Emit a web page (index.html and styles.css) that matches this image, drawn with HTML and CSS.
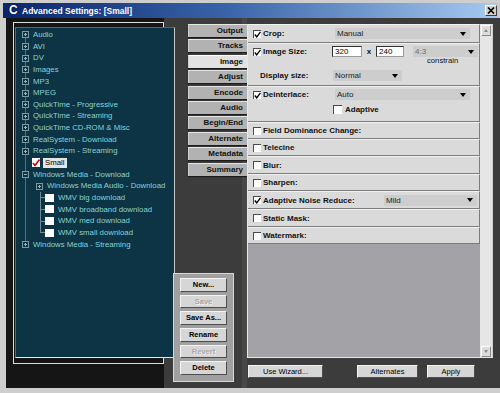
FILE: index.html
```html
<!DOCTYPE html>
<html lang="en">
<head>
    <meta charset="UTF-8">
    <title>Advanced Settings</title>
    <link rel="stylesheet" href="styles.css">
</head>
<body>

<div class="window">
    <div class="titlebar">
        <span class="app-icon">C</span>
        <span class="title">Advanced Settings: [Small]</span>
        <span class="close">
            <svg width="8" height="7" viewBox="0 0 8 7"><path d="M1 0.5 L7 6.5 M7 0.5 L1 6.5" stroke="#000" stroke-width="1.6"/></svg>
        </span>
    </div>

    <div class="main">
        <div class="side">
            <div class="frame">
                <div class="outline">
                    <div class="tree">
                        <ul class="tree-list">
                            <li><i class="exp"></i>Audio</li>
                            <li><i class="exp"></i>AVI</li>
                            <li><i class="exp"></i>DV</li>
                            <li><i class="exp"></i>Images</li>
                            <li><i class="exp"></i>MP3</li>
                            <li><i class="exp"></i>MPEG</li>
                            <li><i class="exp"></i>QuickTime - Progressive</li>
                            <li><i class="exp"></i>QuickTime - Streaming</li>
                            <li><i class="exp"></i>QuickTime CD-ROM &amp; Misc</li>
                            <li><i class="exp"></i>RealSystem - Download</li>
                            <li><i class="exp"></i>RealSystem - Streaming</li>
                            <li class="small-item">
                                <i class="tcb">
                                    <svg width="8" height="8" viewBox="0 0 8 8"><polyline points="1,4 3,6.5 7.5,0.5" fill="none" stroke="#c4001c" stroke-width="1.6"/></svg>
                                </i><span class="selected">Small</span>
                            </li>
                            <li><i class="exp minus"></i>Windows Media - Download</li>
                            <li class="sub"><i class="exp"></i>Windows Media Audio - Download</li>
                            <li class="leaf"><i class="tcb"></i>WMV big download</li>
                            <li class="leaf"><i class="tcb"></i>WMV broadband download</li>
                            <li class="leaf"><i class="tcb"></i>WMV med download</li>
                            <li class="leaf last"><i class="tcb"></i>WMV small download</li>
                            <li><i class="exp"></i>Windows Media - Streaming</li>
                        </ul>
                    </div>
                </div>
            </div>
        </div>

        <div class="mid">
            <div class="tabs">
                <div class="tab">Output</div>
                <div class="tab">Tracks</div>
                <div class="tab active">Image</div>
                <div class="tab">Adjust</div>
                <div class="tab">Encode</div>
                <div class="tab">Audio</div>
                <div class="tab">Begin/End</div>
                <div class="tab">Alternate</div>
                <div class="tab">Metadata</div>
                <div class="tab">Summary</div>
            </div>
            <div class="file-buttons">
                <div class="btn">New...</div>
                <div class="btn disabled">Save</div>
                <div class="btn">Save As...</div>
                <div class="btn">Rename</div>
                <div class="btn disabled">Revert</div>
                <div class="btn">Delete</div>
            </div>
        </div>

        <div class="content">
            <div class="panel">
                <div class="rows">
                    <div class="row h19">
                        <span class="chk"><i class="cb on"><svg width="7" height="7" viewBox="0 0 7 7"><polyline points="0.8,3.5 2.7,5.8 6.5,0.8" fill="none" stroke="#000" stroke-width="1.4"/></svg></i>Crop:</span>
                        <span class="dd w135">Manual<b class="arrow"></b></span>
                    </div>
                    <div class="row stack h43">
                        <div class="line">
                            <span class="chk narrow"><i class="cb on"><svg width="7" height="7" viewBox="0 0 7 7"><polyline points="0.8,3.5 2.7,5.8 6.5,0.8" fill="none" stroke="#000" stroke-width="1.4"/></svg></i>Image Size:</span>
                            <span class="field w30">320</span>
                            <span class="times">x</span>
                            <span class="field w28">240</span>
                            <span class="ratio">
                                <span class="dd w65 dim">4:3<b class="arrow"></b></span>
                                <span class="hint">constrain</span>
                            </span>
                        </div>
                        <div class="line gap5">
                            <span class="plain">Display size:</span>
                            <span class="dd w69">Normal<b class="arrow"></b></span>
                        </div>
                    </div>
                    <div class="row stack h36">
                        <div class="line">
                            <span class="chk"><i class="cb on"><svg width="7" height="7" viewBox="0 0 7 7"><polyline points="0.8,3.5 2.7,5.8 6.5,0.8" fill="none" stroke="#000" stroke-width="1.4"/></svg></i>Deinterlace:</span>
                            <span class="dd w135">Auto<b class="arrow"></b></span>
                        </div>
                        <div class="line gap5 sub-opt">
                            <i class="cb"></i><span class="opt">Adaptive</span>
                        </div>
                    </div>
                    <div class="row h17"><span class="chk"><i class="cb"></i>Field Dominance Change:</span></div>
                    <div class="row h17"><span class="chk"><i class="cb"></i>Telecine</span></div>
                    <div class="row h18"><span class="chk"><i class="cb"></i>Blur:</span></div>
                    <div class="row h17"><span class="chk"><i class="cb"></i>Sharpen:</span></div>
                    <div class="row h18">
                        <span class="chk wide"><i class="cb on"><svg width="7" height="7" viewBox="0 0 7 7"><polyline points="0.8,3.5 2.7,5.8 6.5,0.8" fill="none" stroke="#000" stroke-width="1.4"/></svg></i>Adaptive Noise Reduce:</span>
                        <span class="dd w93">Mild<b class="arrow"></b></span>
                    </div>
                    <div class="row h18"><span class="chk"><i class="cb"></i>Static Mask:</span></div>
                    <div class="row h17"><span class="chk"><i class="cb"></i>Watermark:</span></div>
                    <div class="empty"></div>
                </div>
                <div class="scrollbar">
                    <span class="sb-btn"><b class="up"></b></span>
                    <span class="sb-btn"><b class="down"></b></span>
                </div>
            </div>
            <div class="actions">
                <div class="btn wizard">Use Wizard...</div>
                <div class="btn alternates">Alternates</div>
                <div class="btn apply">Apply</div>
            </div>
        </div>
    </div>
</div>

</body>
</html>
```

FILE: styles.css
```css
html, body {
    margin: 0;
    padding: 0;
}
body {
    width: 500px;
    height: 393px;
    overflow: hidden;
    background: #cfcece;
    font-family: "Liberation Sans", Arial, sans-serif;
}
.window {
    height: 393px;
    padding-top: 3px;
    box-sizing: border-box;
    background: #cfcece;
}

/* title bar */
.titlebar {
    display: flex;
    align-items: center;
    height: 15px;
    margin: 0 2px 0 3px;
    background: linear-gradient(to right, #0a246a 0%, #3a64a8 45%, #a6caf0 100%);
}
.app-icon {
    width: 10px;
    margin-left: 6px;
    font-size: 12px;
    font-weight: bold;
    line-height: 13px;
    color: #fff;
    text-shadow: 1px 0 0 #001040, -1px 0 0 #001040;
}
.title {
    margin-left: 3px;
    font-size: 8.5px;
    font-weight: bold;
    color: #fff;
}
.close {
    display: flex;
    align-items: center;
    justify-content: center;
    width: 12px;
    height: 11px;
    margin-left: auto;
    margin-right: 1px;
    box-sizing: border-box;
    background: #d4d0c8;
    border: 1px solid;
    border-color: #fff #404040 #404040 #fff;
}

.main {
    display: flex;
    height: 370px;
    margin-left: 6px;
    background: #3c3c3c;
}

/* preset tree */
.side {
    width: 167px;
    flex: none;
}
.frame {
    width: 158px;
    height: 100%;
    padding: 4px 0 24px 7px;
    box-sizing: border-box;
    background: #151515;
}
.outline {
    height: 100%;
    padding: 4px 0 5px 1px;
    box-sizing: border-box;
    border: 1px solid #dcdcdc;
}
.tree {
    width: 160px;
    height: 100%;
    box-sizing: border-box;
    padding: 1px 0 0 6px;
    background: #0c3444;
    border: 1px solid;
    border-color: #5e6468 #c8c8c8 #e6e6e6 #5e6468;
}
.tree-list {
    list-style: none;
    margin: 0;
    padding: 0;
    font-size: 7.8px;
    line-height: 11.65px;
    color: #8ad2d4;
    white-space: nowrap;
    background: linear-gradient(#50707a, #50707a) no-repeat 3px 6px / 1px 210px;
}
.tree-list li {
    display: flex;
    align-items: center;
    height: 11.65px;
}
.exp {
    width: 7px;
    height: 7px;
    margin-right: 4px;
    box-sizing: border-box;
    border: 1px solid #7d9aa2;
    background:
        linear-gradient(#9db4b8, #9db4b8) center / 3px 1px no-repeat,
        linear-gradient(#9db4b8, #9db4b8) center / 1px 3px no-repeat,
        #0c3444;
}
.exp.minus {
    background:
        linear-gradient(#9db4b8, #9db4b8) center / 3px 1px no-repeat,
        #0c3444;
}
.tree-list .sub {
    padding-left: 14px;
}
.tree-list .leaf {
    padding-left: 23px;
    background:
        linear-gradient(#6f8a90, #6f8a90) 18px 0 / 1px 100% no-repeat,
        linear-gradient(#6f8a90, #6f8a90) 18px 50% / 5px 1px no-repeat;
}
.tree-list .leaf.last {
    background:
        linear-gradient(#6f8a90, #6f8a90) 18px 0 / 1px 50% no-repeat,
        linear-gradient(#6f8a90, #6f8a90) 18px 50% / 5px 1px no-repeat;
}
.tcb {
    display: flex;
    align-items: center;
    justify-content: center;
    width: 9px;
    height: 8px;
    margin-right: 4px;
    background: #fff;
}
.small-item {
    padding-left: 10px;
}
.small-item .tcb {
    width: 8px;
    height: 9px;
    margin-right: 3px;
}
.selected {
    padding: 0 2px;
    line-height: 10px;
    background: #e4e4e4;
    color: #000;
}

/* tabs and preset buttons */
.mid {
    width: 74px;
    flex: none;
    display: flex;
    flex-direction: column;
    background: linear-gradient(#484848, #484848) no-repeat right 0 top 0 / 5px 100%;
}
.tabs {
    margin: 6px 0 0 15px;
}
.tab {
    height: 13px;
    margin-bottom: 2.4px;
    padding-right: 4px;
    box-sizing: border-box;
    text-align: right;
    font-size: 8px;
    font-weight: bold;
    line-height: 12px;
    color: #111;
    background: #b2b2b2;
    border-top: 1px solid #e6e6e6;
    border-left: 1px solid #d2d2d2;
    box-shadow: 0 1px 1px #1c1c1c;
}
.tab.active {
    background: #e2e2e2;
    border-top-color: #fff;
}
.file-buttons {
    width: 61px;
    height: 109px;
    margin-top: auto;
    margin-bottom: 6px;
    padding: 4px 0 0 6px;
    box-sizing: border-box;
    background-color: #a0a0a0;
    border: 1px solid #d8d8d8;
}
.btn {
    height: 13.5px;
    box-sizing: border-box;
    text-align: center;
    font-size: 7.5px;
    line-height: 12px;
    color: #000;
    background: #d6d6d6;
    border: 1px solid;
    border-color: #f4f4f4 #4c4c4c #4c4c4c #f4f4f4;
}
.file-buttons .btn {
    width: 47px;
    margin-bottom: 3.2px;
    font-weight: bold;
}
.btn.disabled {
    color: #a9a9a9;
    text-shadow: 1px 1px 0 #f0f0f0;
}

/* settings panel */
.content {
    width: 246px;
    flex: none;
    display: flex;
    flex-direction: column;
}
.panel {
    display: flex;
    height: 334px;
    margin-top: 6px;
    box-sizing: border-box;
    border-left: 1px solid #e8e8e8;
    border-bottom: 1px solid #e8e8e8;
}
.rows {
    width: 232px;
    display: flex;
    flex-direction: column;
}
.empty {
    flex: 1;
    background-color: #a3a2a7;
}
.row {
    display: flex;
    align-items: center;
    flex: none;
    padding-left: 5px;
    box-sizing: border-box;
    background: #dadada;
    border-top: 1px solid #f2f2f2;
    border-bottom: 1px solid #7c7c7c;
    border-right: 1px solid #7c7c7c;
    font-size: 8px;
    color: #111;
}
.row.stack {
    flex-direction: column;
    align-items: stretch;
    padding-top: 2px;
}
.h17 { height: 17px; }
.h18 { height: 18px; }
.h19 { height: 19px; }
.h36 { height: 36px; }
.h43 { height: 43px; padding-top: 3px; }
.line {
    display: flex;
    align-items: flex-start;
}
.line .chk {
    height: 11px;
}
.gap5 {
    margin-top: 5px;
    align-items: center;
}
.chk {
    display: flex;
    align-items: center;
    width: 82px;
    flex: none;
    font-weight: bold;
    white-space: nowrap;
}
.chk.narrow { width: 79px; }
.chk.wide { width: 131px; }
.cb {
    display: flex;
    align-items: center;
    justify-content: center;
    width: 8px;
    height: 8px;
    margin-right: 2px;
    box-sizing: border-box;
    background: #fff;
    border-top: 1px solid #4a4a4a;
    border-left: 1px solid #4a4a4a;
    flex: none;
}
.dd {
    display: flex;
    align-items: center;
    justify-content: space-between;
    height: 11px;
    padding: 0 4px 0 2px;
    box-sizing: border-box;
    background: #cdcdcd;
    font-weight: normal;
    color: #222;
}
.dd.dim { color: #6a6a6a; }
.arrow {
    width: 0;
    height: 0;
    border-top: 4px solid #000;
    border-left: 3px solid transparent;
    border-right: 3px solid transparent;
}
.w135 { width: 135px; }
.w65 { width: 65px; }
.w69 { width: 69px; }
.w93 { width: 93px; }
.field {
    height: 11px;
    padding-left: 2px;
    box-sizing: border-box;
    line-height: 9px;
    background: #fff;
    border: 1px solid;
    border-color: #303030 #9a9a9a #9a9a9a #303030;
    color: #000;
}
.w30 { width: 30px; }
.w28 { width: 28px; }
.times {
    width: 14px;
    text-align: center;
    font-weight: bold;
    line-height: 11px;
}
.ratio {
    display: flex;
    flex-direction: column;
    margin-left: 9px;
}
.hint {
    padding-left: 14px;
    line-height: 8px;
    font-size: 7.7px;
}
.plain {
    width: 73px;
    padding-left: 7px;
    font-weight: bold;
}
.sub-opt {
    padding-left: 80px;
}
.sub-opt .cb {
    width: 9px;
    height: 9px;
    margin-right: 3px;
}
.opt {
    font-weight: bold;
}
.scrollbar {
    width: 13px;
    display: flex;
    flex-direction: column;
    justify-content: space-between;
    padding: 1px 1px 0 1px;
    box-sizing: border-box;
    background: #e6e6e6;
    border-right: 1px solid #cfcfcf;
}
.sb-btn {
    display: flex;
    align-items: center;
    justify-content: center;
    height: 11px;
    box-sizing: border-box;
    background: #dcdcdc;
    border: 1px solid;
    border-color: #fff #8a8a8a #8a8a8a #fff;
}
.up, .down {
    width: 0;
    height: 0;
    border-left: 2px solid transparent;
    border-right: 2px solid transparent;
}
.up { border-bottom: 3px solid #8a8a8a; }
.down { border-top: 3px solid #8a8a8a; }

.actions {
    display: flex;
    margin-top: 7px;
}
.actions .btn {
    height: 13px;
}
.wizard { width: 75px; margin-left: 1px; }
.alternates { width: 61px; margin-left: 34px; }
.apply { width: 48px; margin-left: 9px; }
```
